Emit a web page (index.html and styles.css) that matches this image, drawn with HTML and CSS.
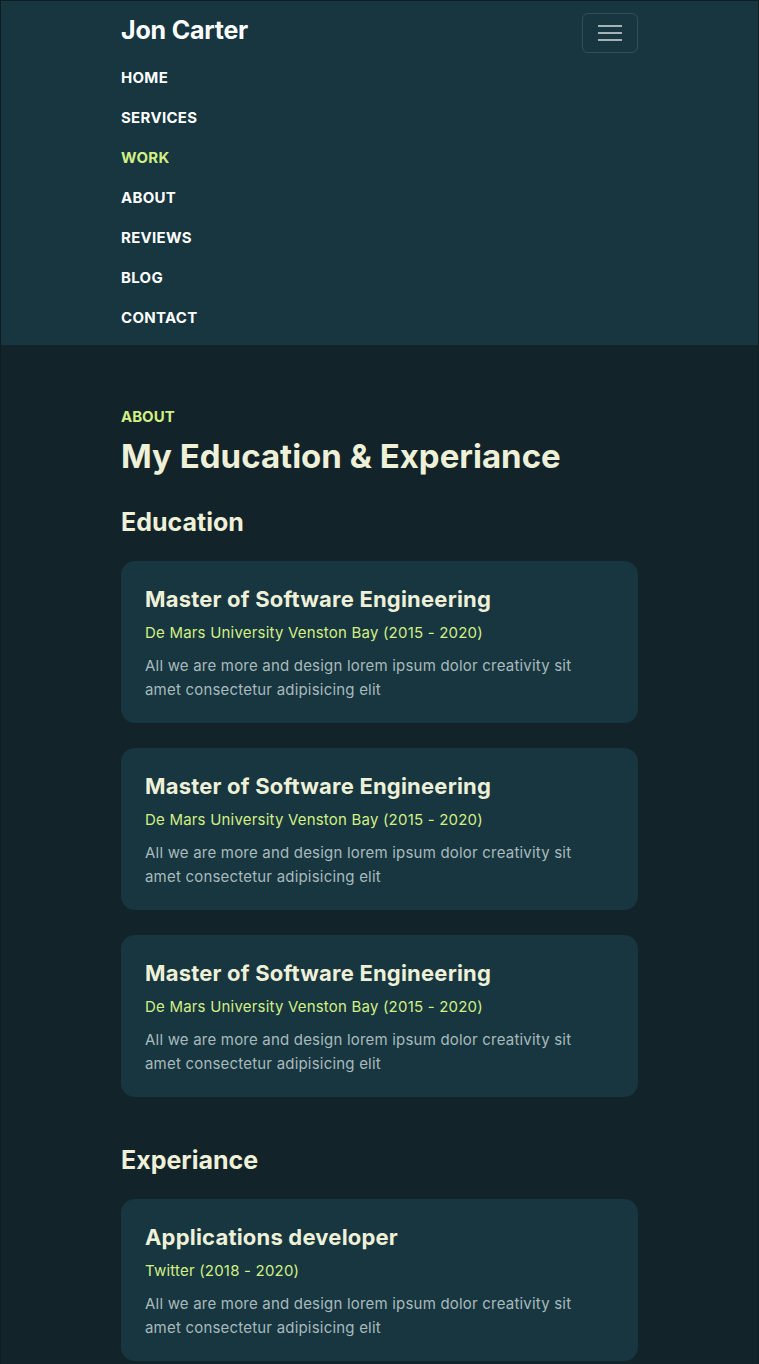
FILE: index.html
```html
<!DOCTYPE html>
<html lang="en">
<head>
<meta charset="utf-8">
<title>Jon Carter</title>
<link rel="stylesheet" href="styles.css">
</head>
<body>
<div class="frame">
  <header class="navbar">
    <div class="container">
      <div class="nav-top">
        <a class="brand" href="#">Jon Carter</a>
        <button class="toggler" aria-label="Toggle navigation">
          <svg width="26" height="20" viewBox="0 0 26 20"><path d="M1 3h24M1 10h24M1 17h24" stroke="#a3b3b5" stroke-width="2"/></svg>
        </button>
      </div>
      <ul class="nav-links">
        <li><a href="#">HOME</a></li>
        <li><a href="#">SERVICES</a></li>
        <li><a class="active" href="#">WORK</a></li>
        <li><a href="#">ABOUT</a></li>
        <li><a href="#">REVIEWS</a></li>
        <li><a href="#">BLOG</a></li>
        <li><a href="#">CONTACT</a></li>
      </ul>
    </div>
  </header>
  <main class="about">
    <div class="container">
      <p class="eyebrow">ABOUT</p>
      <h1 class="title">My Education &amp; Experiance</h1>
      <h2 class="sub-title">Education</h2>
      <div class="cards">
        <div class="card">
          <h3>Master of Software Engineering</h3>
          <p class="meta">De Mars University Venston Bay (2015 - 2020)</p>
          <p class="desc">All we are more and design lorem ipsum dolor creativity sit amet consectetur adipisicing elit</p>
        </div>
        <div class="card">
          <h3>Master of Software Engineering</h3>
          <p class="meta">De Mars University Venston Bay (2015 - 2020)</p>
          <p class="desc">All we are more and design lorem ipsum dolor creativity sit amet consectetur adipisicing elit</p>
        </div>
        <div class="card">
          <h3>Master of Software Engineering</h3>
          <p class="meta">De Mars University Venston Bay (2015 - 2020)</p>
          <p class="desc">All we are more and design lorem ipsum dolor creativity sit amet consectetur adipisicing elit</p>
        </div>
      </div>
      <h2 class="sub-title exp">Experiance</h2>
      <div class="cards">
        <div class="card">
          <h3>Applications developer</h3>
          <p class="meta">Twitter (2018 - 2020)</p>
          <p class="desc">All we are more and design lorem ipsum dolor creativity sit amet consectetur adipisicing elit</p>
        </div>
      </div>
    </div>
  </main>
</div>
</body>
</html>
```

FILE: styles.css
```css
* { box-sizing: border-box; }
html, body { margin: 0; padding: 0; }
body {
  background: #12242a;
  font-family: "Inter", "Noto Sans", sans-serif;
  color: #eef0d8;
}
.frame {
  border: 1px solid #0d1d21;
  min-height: 1364px;
  overflow: hidden;
}
.container {
  width: 517px;
  margin: 0 auto;
}
.navbar {
  background: #173640;
  padding: 12px 0 7px;
}
.nav-top {
  display: flex;
  justify-content: space-between;
  align-items: flex-start;
}
.brand {
  color: #ffffff;
  text-decoration: none;
  font-size: 25px;
  font-weight: 700;
  letter-spacing: -0.2px;
  line-height: 34px;
}
.toggler {
  width: 56px;
  height: 40px;
  background: transparent;
  border: 1px solid rgba(255,255,255,0.12);
  border-radius: 6px;
  display: flex;
  align-items: center;
  justify-content: center;
  padding: 0;
}
.nav-links {
  list-style: none;
  margin: 5px 0 0;
  padding: 0;
  display: flex;
  flex-direction: column;
}
.nav-links a {
  display: block;
  color: #ffffff;
  text-decoration: none;
  font-size: 15px;
  font-weight: 700;
  letter-spacing: 0.3px;
  line-height: 40px;
}
.nav-links a.active { color: #d3ef84; }
.about {
  padding: 63px 0 40px;
}
.eyebrow {
  margin: 0;
  color: #d3ef84;
  font-size: 15px;
  font-weight: 700;
  line-height: 18px;
}
.title {
  margin: 8px 0 0;
  font-size: 33px;
  font-weight: 700;
  line-height: 44px;
  color: #eef0d8;
}
.sub-title {
  margin: 27px 0 22px;
  font-size: 25px;
  font-weight: 700;
  line-height: 34px;
  color: #eef0d8;
}
.sub-title.exp { margin-top: 46px; }
.cards {
  display: flex;
  flex-direction: column;
  gap: 25px;
}
.card {
  background: #173640;
  border-radius: 14px;
  padding: 23px 40px 25px 24px;
  height: 162px;
}
.card h3 {
  margin: 0;
  font-size: 22px;
  font-weight: 700;
  letter-spacing: 0.2px;
  line-height: 30px;
  color: #eef0d8;
}
.card .meta {
  margin: 8px 0 0;
  color: #d3ef84;
  font-size: 15px;
  letter-spacing: 0.2px;
  line-height: 22px;
}
.card .desc {
  margin: 10px 0 0;
  color: #a9babc;
  font-size: 15px;
  letter-spacing: 0.2px;
  line-height: 24px;
}
```
